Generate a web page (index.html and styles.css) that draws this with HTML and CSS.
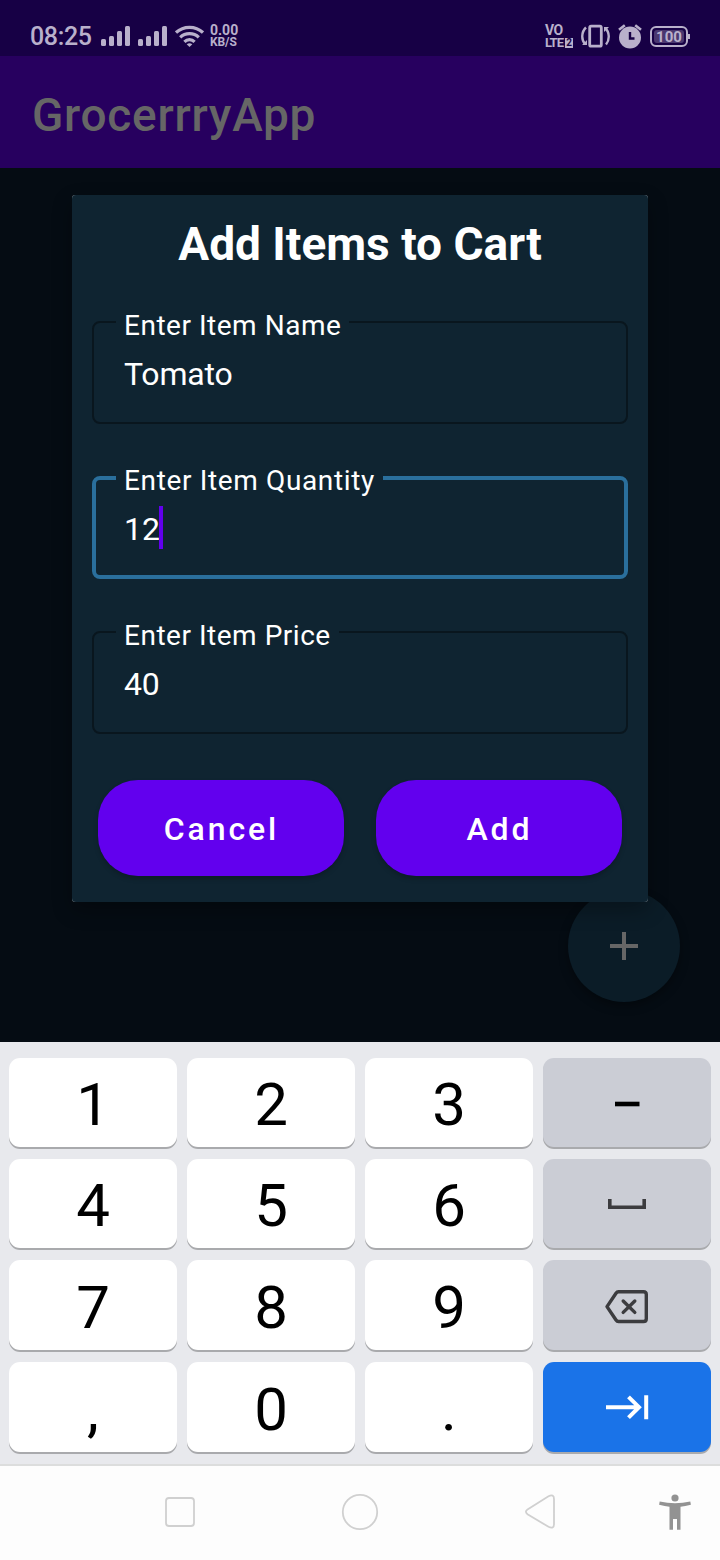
FILE: index.html
```html
<!DOCTYPE html>
<html lang="en">
<head>
<meta charset="utf-8">
<title>GrocerrryApp</title>
<link rel="stylesheet" href="styles.css">
</head>
<body>
<div class="phone">
  <header class="status">
    <div class="status-left">
      <span class="clock">08:25</span>
      <svg class="signal" width="66" height="22" viewBox="0 0 66 22" fill="currentColor"><rect x="0" y="14" width="5" height="7" rx="1.5"/><rect x="8" y="11" width="5" height="10" rx="1.5"/><rect x="16" y="6" width="5" height="15" rx="1.5"/><rect x="24" y="1" width="5" height="20" rx="1.5"/><rect x="37" y="14" width="5" height="7" rx="1.5"/><rect x="45" y="11" width="5" height="10" rx="1.5"/><rect x="53" y="6" width="5" height="15" rx="1.5"/><rect x="61" y="1" width="5" height="20" rx="1.5"/></svg>
      <svg class="wifi" width="29" height="22" viewBox="0 0 29 22" fill="none" stroke="currentColor" stroke-width="3.200"><path d="M1 7.600C8.500.500 20.500.500 28 7.600M5.200 12.300C10.300 7.400 18.700 7.400 23.800 12.300M9.400 16.800C12.200 14 16.800 14 19.600 16.800"/><path d="M11.700 19.200Q14.500 17.200 17.300 19.200L14.500 22Z" fill="currentColor" stroke="none"/></svg>
      <span class="speed"><b>0.00</b><b class="unit">KB/S</b></span>
    </div>
    <div class="status-right">
      <span class="volte"><b>VO</b><span class="lte"><b>LTE</b><b class="sim">2</b></span></span>
      <svg class="vibrate" width="29" height="24" viewBox="0 0 29 24" fill="none" stroke="currentColor" stroke-width="2.400"><rect x="8.700" y="2.200" width="11.600" height="20" rx="1.500" stroke-width="2.800"/><path d="M5 3.500C.200 8 .200 16 4 20M24 4C28.800 8 28.800 16 25 20.500"/><path d="M1 21H6V16ZM28 3H23V8Z" fill="currentColor" stroke="none"/></svg>
      <svg class="alarm" width="24" height="25" viewBox="0 0 24 25" fill="none" stroke="currentColor"><circle cx="12" cy="13.500" r="11" fill="currentColor" stroke="none"/><path d="M1 5.800L6.800 1.200M23 5.800L17.200 1.200" stroke-width="2.600"/><path class="hands" d="M12 8V14.500H16.500" stroke-width="2.400"/></svg>
      <span class="battery"><span class="level">100</span></span>
    </div>
  </header>
  <div class="appbar">GrocerrryApp</div>
  <main class="screen">
    <div class="fab"><svg width="28" height="28" viewBox="0 0 28 28"><path d="M12 0h4v12h12v4H16v12h-4V16H0v-4h12z" fill="#666"/></svg></div>
    <section class="dialog">
      <h1>Add Items to Cart</h1>
      <fieldset class="field"><legend><span class="label">Enter Item Name</span></legend><div class="value">Tomato</div></fieldset>
      <fieldset class="field focused"><legend><span class="label">Enter Item Quantity</span></legend><div class="value">12<i class="caret"></i></div></fieldset>
      <fieldset class="field"><legend><span class="label">Enter Item Price</span></legend><div class="value">40</div></fieldset>
      <div class="actions"><button>Cancel</button><button>Add</button></div>
    </section>
  </main>
  <section class="keyboard">
    <div class="key">1</div><div class="key">2</div><div class="key">3</div>
    <div class="key side"><svg width="44" height="40" viewBox="0 0 44 40"><path d="M10 20H34.500" stroke="#000" stroke-width="4.600"/></svg></div>
    <div class="key">4</div><div class="key">5</div><div class="key">6</div>
    <div class="key side"><svg width="44" height="40" viewBox="0 0 44 40" fill="none"><path d="M4.800 14V22.200H39.200V14" stroke="#3c3c3f" stroke-width="3.600"/></svg></div>
    <div class="key">7</div><div class="key">8</div><div class="key">9</div>
    <div class="key side"><svg width="44" height="40" viewBox="0 0 44 40" fill="none" stroke="#3c3c3f" stroke-width="3.400"><path d="M13.500 5.700H38.500Q41.300 5.700 41.300 8.500V32.700Q41.300 35.500 38.500 35.500H13.500Q12 35.500 11 34L2 20.600L11 7.200Q12 5.700 13.500 5.700Z" stroke-linejoin="round"/><path d="M18.200 15L29.800 26.400M29.800 15L18.200 26.400" stroke-linecap="round"/></svg></div>
    <div class="key">,</div><div class="key">0</div><div class="key">.</div>
    <div class="key next"><svg width="44" height="40" viewBox="0 0 44 40" fill="none" stroke="#fff" stroke-width="4"><path d="M1 19.200H35M23.500 8.800L34 19.200L23.500 29.700M41.200 7.200V31.200"/></svg></div>
  </section>
  <nav class="navbar">
    <svg width="720" height="94" viewBox="0 0 720 94" fill="none" stroke="#d0d0d0" stroke-width="1.800"><rect x="166" y="32" width="28" height="28" rx="3"/><circle cx="360" cy="46" r="17.200"/><path d="M527.500 43.500L548.500 30.300Q554 27.500 554 33V58Q554 63.500 548.500 60.800L527.500 48.200Q524.300 45.800 527.500 43.500Z"/><g fill="#929292" stroke="none"><circle cx="675" cy="32" r="3.600"/><path d="M659.700 35.500Q675 38.800 690.300 35.500L690.900 38.800Q685 40.300 680.500 40.800V63.700H677V53H673V63.700H669.500V40.800Q665 40.300 659.100 38.800Z"/></g></svg>
  </nav>
</div>
</body>
</html>
```
FILE: styles.css
```css
* { box-sizing: border-box; }
body { margin: 0; font-family: Roboto, "Liberation Sans", sans-serif; }
svg { display: block; flex: none; }
.phone { width: 720px; height: 1560px; display: flex; flex-direction: column; overflow: hidden; background: #050c13; }
.status { height: 56px; flex: none; background: #170045; color: #b9b0cb; display: flex; justify-content: space-between; padding: 16px 30px 0 30px; }
.status-left, .status-right { display: flex; height: 40px; align-items: center; }
.clock { width: 71px; font-size: 25px; line-height: 40px; padding-top: 2px; font-weight: 500; letter-spacing: -0.350px; white-space: nowrap; }
.wifi { margin-left: 8px; }
.speed { margin-left: 6px; display: flex; flex-direction: column; font-size: 14px; line-height: 12px; white-space: nowrap; }
.speed b { display: block; }
.speed .unit { font-size: 12px; line-height: 12px; letter-spacing: -0.100px; }
.volte { display: flex; flex-direction: column; width: 29px; font-size: 14px; line-height: 13px; letter-spacing: -0.500px; }
.lte { display: flex; align-items: center; letter-spacing: -1px; line-height: 12px; font-size: 13px; }
.lte b:first-child { width: 20px; }
.sim { width: 8px; height: 10px; background: #b9b0cb; color: #170045; font-size: 10px; line-height: 10px; text-align: center; letter-spacing: 0; flex: none; }
.vibrate { margin-left: 7px; }
.alarm { margin-left: 8px; }
.hands { stroke: #170045; }
.battery { margin-left: 8px; width: 38px; height: 21px; border: 2px solid #b9b0cb; border-radius: 6px; padding: 2px; margin-right: 2px; position: relative; }
.battery::after { content: ""; position: absolute; right: -4px; top: 6px; width: 2px; height: 5px; background: #b9b0cb; }
.level { display: block; background: #4a376f; border-radius: 3px; height: 13px; line-height: 14px; font-size: 15px; font-weight: 700; text-align: center; }
.appbar { height: 112px; flex: none; background: #27005f; color: #666; font-size: 46px; font-weight: 500; line-height: 118px; letter-spacing: .740px; padding-left: 32px; }
.screen { position: relative; height: 874px; flex: none; padding: 27px 72px 0; }
.fab { position: absolute; right: 40px; top: 722px; width: 112px; height: 112px; border-radius: 50%; background: #0b1c27; display: flex; align-items: center; justify-content: center; box-shadow: 0 4px 10px rgba(0,0,0,.35); }
.dialog { position: relative; z-index: 0; height: 707px; background: #7b868d; border-radius: 3px; padding: 0 20px; box-shadow: 0 8px 20px rgba(0,0,0,.3); }
.dialog::before { content: ""; position: absolute; z-index: -1; inset: 0; border-radius: 4px; background: #0f2431; }
h1 { margin: 0; height: 126px; line-height: 98px; text-align: center; color: #fff; font-size: 46px; font-weight: 700; white-space: nowrap; }
.field { margin: 0 0 52px; padding: 0; min-width: 0; height: 103px; border: 2px solid #09161e; border-radius: 8px; color: #fff; }
.field legend { margin-left: 22px; padding: 0 8px; height: 2px; line-height: 9px; font-size: 28px; white-space: nowrap; }
.label { letter-spacing: .520px; }
.value { margin: 29px 0 0 30px; height: 44px; font-size: 32px; line-height: 44px; letter-spacing: -0.200px; display: flex; }
.focused { border: 4px solid #2a6f9c; }
.focused legend { height: 4px; margin-left: 20px; }
.focused .label { letter-spacing: .640px; }
.focused .value { margin: 27px 0 0 28px; letter-spacing: 0; }
.caret { width: 4px; height: 43px; margin: -1px 0 0 -1px; background: #6200ee; }
.actions { display: flex; gap: 32px; padding: 0 6px; margin-top: -6px; }
button { flex: 1; height: 96px; border: 0; border-radius: 40px; background: #6200ee; color: #fff; font: 500 32px/98px Roboto, "Liberation Sans", sans-serif; letter-spacing: 2.900px; padding: 0 0 0 1px; box-shadow: 0 3px 5px rgba(0,0,0,.2); }
.keyboard { height: 422px; flex: none; background: #e8e9ed; padding: 16px 9px 0; display: grid; grid-template-columns: repeat(4, 168px); grid-template-rows: 89px 89px 90px 90px; column-gap: 10px; row-gap: 12px; }
.key { background: #fff; border-radius: 11px; box-shadow: 0 2px 0 #a9aaad; display: flex; align-items: center; justify-content: center; font-size: 60px; line-height: 89px; padding-top: 4px; color: #000; }
.side { background: #cbcdd5; }
.side, .next { padding-top: 2px; }
.next { background: #1a73e8; }
.navbar { height: 96px; flex: none; background: #fdfdfd; border-top: 2px solid #dcdddd; }
```
